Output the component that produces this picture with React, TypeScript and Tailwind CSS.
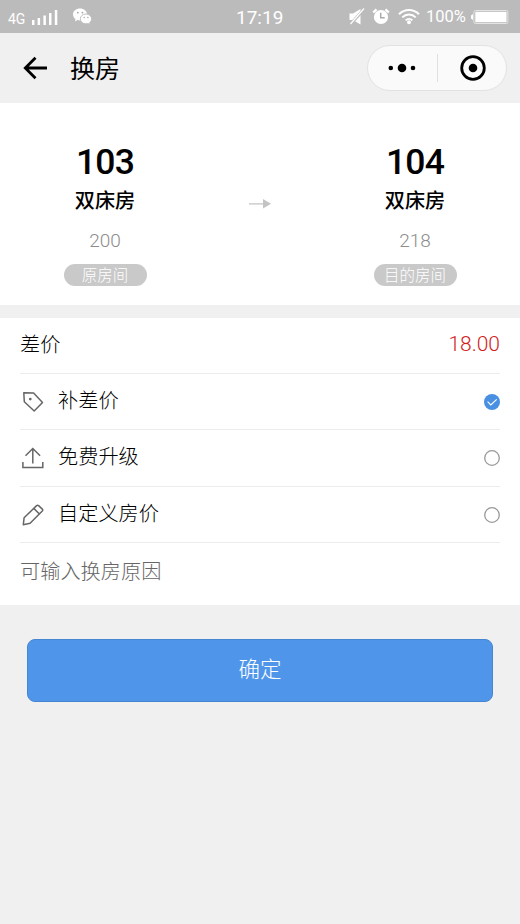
import React, { useState } from "react";

const FONT = "font-['Liberation_Sans','Noto_Sans_CJK_SC',sans-serif]";
const DIGITS = "font-['Roboto','Liberation_Sans',sans-serif]";

function StatusBar() {
  return (
    <div className={`flex h-[33px] items-center bg-[#bbbbbb] text-white ${DIGITS}`}>
      <span className="ml-2 mt-[4px] w-[19px] text-[14px] leading-none">4G</span>
      <svg className="ml-1 h-4 w-7" viewBox="0 0 28 16" fill="currentColor">
        <path d="M1 11h2.500v5H1zM6.600 9h2.500v7H6.600zM12.400 6.500h2.500V16h-2.500zM18 4h2.500v12H18zM23.800 1h2.500v15h-2.500z" />
      </svg>
      <svg className="ml-3.5 h-[17px] w-[19px]" viewBox="0 0 19 17">
        <path fill="#fff" d="M7 .6C3.100.6 0 3.200 0 6.500c0 1.900 1 3.500 2.500 4.600L1.900 13.400l2.500-1.300c.9.3 1.800.4 2.800.4C10.900 12.500 14 9.800 14 6.500S10.900.6 7 .6z" />
        <path fill="#fff" stroke="#bbb" strokeWidth=".9" d="M13 6c-3.300 0-5.700 2.200-5.700 4.900s2.500 4.900 5.700 4.900c.8 0 1.600-.1 2.300-.4l1.900 1-.5-1.900c1.100-.9 1.900-2.200 1.900-3.600C18.600 8.200 16.200 6 13 6z" />
        <g fill="#aaa">
          <circle cx="4.800" cy="4.700" r=".9" />
          <circle cx="9.400" cy="4.700" r=".9" />
          <circle cx="11.200" cy="9.500" r=".75" />
          <circle cx="14.900" cy="9.500" r=".75" />
        </g>
      </svg>
      <span className="ml-[144px] mt-[2px] w-[50px] text-[19px] leading-none">17:19</span>
      <svg className="ml-[62px] h-[17px] w-[17px]" viewBox="0 0 17 17">
        <path fill="#fff" d="M1.500 5.500H5L12.500 1v15.500L5 12H1.500z" />
        <path stroke="#bbb" strokeWidth="3" d="M2 17L16.500 .5" />
        <path stroke="#fff" strokeWidth="1.200" d="M2.500 16L16 .5" />
      </svg>
      <svg className="ml-[7px] h-[17px] w-[18px]" viewBox="0 0 18 17" fill="none">
        <circle cx="9" cy="9" r="7.100" fill="#fff" />
        <path d="M1.200 4.500L4.500 1.300M16.800 4.500L13.500 1.300" stroke="#fff" strokeWidth="2.300" />
        <path d="M8.700 4.800v5h4" stroke="#aaa" strokeWidth="1.500" />
      </svg>
      <svg className="ml-[8px] h-[17px] w-[22px]" viewBox="0 0 22 17" fill="none" stroke="#fff" strokeWidth="2">
        <path d="M1 6.300C6.500.6 15.500.6 21 6.300M4.300 9.400c3.800-3.800 9.600-3.800 13.400 0M7.600 12.400c2-2 4.800-2 6.800 0" />
        <circle cx="11" cy="14.300" r="1" fill="#fff" />
      </svg>
      <span className="ml-[6px] mt-[2px] w-[42px] text-[16.500px] leading-none">100%</span>
      <svg className="ml-[3px] h-4 w-[38px]" viewBox="0 0 38 16">
        <path fill="#fff" d="M0 6.500L2 5v6L0 9.500z" />
        <rect x="2.900" y="1.500" width="34" height="13" rx="1.500" fill="none" stroke="#e4e4e4" />
        <rect x="4.300" y="2.800" width="31.200" height="10.400" fill="#fff" />
      </svg>
    </div>
  );
}

function NavBar() {
  return (
    <header className="flex h-[70px] items-center bg-[#f0f0f0]">
      <svg className="ml-[23px] h-6 w-6" viewBox="0 0 24 24" fill="none" stroke="#000" strokeWidth="2.800">
        <path d="M24 12H2.500M12.500 1.800L2.300 12l10.200 10.200" />
      </svg>
      <h1 className="ml-[23px] mt-px text-[25px] leading-[30px] text-black">换房</h1>
      <div className="ml-auto mr-[13px] flex h-[46px] w-[140px] items-center rounded-full border border-[#e2e2e2] bg-[#fafafa]">
        <svg className="ml-5 h-3 w-7" viewBox="0 0 28 12">
          <circle cx="2.800" cy="6" r="2.300" />
          <circle cx="14" cy="6" r="4.300" />
          <circle cx="25" cy="6" r="2.300" />
        </svg>
        <div className="ml-[21px] h-7 w-px bg-[#e0e0e0]" />
        <svg className="ml-[22px] h-[26px] w-[26px]" viewBox="0 0 26 26">
          <circle cx="13" cy="13" r="11.300" fill="none" stroke="#000" strokeWidth="2.800" />
          <circle cx="13" cy="13" r="4.300" />
        </svg>
      </div>
    </header>
  );
}

function Room({ number, type, price, label }: { number: string; type: string; price: string; label: string }) {
  return (
    <div className="flex w-[210px] flex-col items-center">
      <div className={`mt-[39px] h-10 text-[35.500px] font-medium leading-10 tracking-[-0.8px] text-black ${DIGITS}`}>{number}</div>
      <div className="mt-[5px] h-7 text-[20.200px] font-medium leading-7 text-black">{type}</div>
      <div className={`mt-[14px] h-6 text-[19px] font-light leading-6 text-[#8c8c8c] ${DIGITS}`}>{price}</div>
      <div className="mt-[11px] h-[22px] w-[83px] rounded-full bg-[#c9c9c9] text-center text-[15.500px] font-light leading-[23px] text-white">{label}</div>
    </div>
  );
}

const ICON = "h-[22px] w-[22px]";

function TagIcon() {
  return (
    <svg className={ICON} viewBox="0 0 22 22" fill="none" stroke="#666" strokeWidth="1.500" strokeLinejoin="round">
      <path d="M1.800 1.800l9.800.3 8.900 9.400-8.300 8.500L2.300 10.800z" />
      <circle cx="8.300" cy="8.100" r=".6" fill="#666" />
    </svg>
  );
}

function UploadIcon() {
  return (
    <svg className={ICON} viewBox="0 0 22 22" fill="none" stroke="#666" strokeWidth="1.500">
      <path d="M.9 15v5.400h19.900V15M10.800 16.500V2M3.500 8.700L10.800 1.500l7.300 7.200" />
    </svg>
  );
}

function PencilIcon() {
  return (
    <svg className={ICON} viewBox="0 0 22 22" fill="none" stroke="#666" strokeWidth="1.500" strokeLinejoin="round">
      <path d="M1.300 20.700l.8-6.900L14.600 1.600q1-.8 2 0l3.700 3.500q.9.900 0 1.900L8.100 19.300zM11.800 4.400l5.400 5.400" />
    </svg>
  );
}

function Option({ icon, label, checked, onSelect }: { icon: React.ReactNode; label: string; checked: boolean; onSelect: () => void }) {
  return (
    <div onClick={onSelect} className="flex h-[56.300px] items-center border-b border-[#ececec]">
      <span className="ml-[2px] mt-px">{icon}</span>
      <span className="mb-px ml-[14px] text-[20.200px] font-light leading-7 text-black">{label}</span>
      <svg className="ml-auto mt-px h-4 w-4" viewBox="0 0 16 16" fill="none">
        {checked ? (
          <>
            <circle cx="8" cy="8" r="8" fill="#4a90e2" />
            <path d="M3.600 7.600l3.200 3.300 5.900-5.600" stroke="#fff" strokeWidth="1.100" />
          </>
        ) : (
          <circle cx="8" cy="8" r="7.300" stroke="#999" strokeWidth="1.300" />
        )}
      </svg>
    </div>
  );
}

const options = [
  { label: "补差价", icon: <TagIcon /> },
  { label: "免费升级", icon: <UploadIcon /> },
  { label: "自定义房价", icon: <PencilIcon /> },
];

export default function App() {
  const [selected, setSelected] = useState(0);
  return (
    <div className={`flex h-[924px] w-[520px] flex-col bg-[#f0f0f0] ${FONT}`}>
      <StatusBar />
      <NavBar />
      <section className="flex h-[202px] justify-between bg-white">
        <Room number="103" type="双床房" price="200" label="原房间" />
        <svg className="mt-[95px] h-3 w-[22px]" viewBox="0 0 22 12" fill="#c4c4c4">
          <path d="M0 5.300h14V1l8 4.800-8 4.700V6.500H0z" />
        </svg>
        <Room number="104" type="双床房" price="218" label="目的房间" />
      </section>
      <section className="mt-[13px] h-[287px] bg-white px-5">
        <div className="flex h-[56px] items-center justify-between border-b border-[#ececec] pb-[2px]">
          <span className="text-[20.200px] font-light leading-7 text-black">差价</span>
          <span className={`mb-[2px] text-[21px] font-light leading-7 text-[#d01c1c] ${DIGITS}`}>18.00</span>
        </div>
        {options.map((o, i) => (
          <Option key={o.label} icon={o.icon} label={o.label} checked={i === selected} onSelect={() => setSelected(i)} />
        ))}
        <div className="mt-[15px] text-[20.200px] font-light leading-7 text-[#666]">可输入换房原因</div>
      </section>
      <button className="mx-[27px] mt-[34px] h-[63px] rounded-lg border border-[#4585d2] bg-[#4f96eb] text-[21.500px] font-light text-white">
        确定
      </button>
    </div>
  );
}
